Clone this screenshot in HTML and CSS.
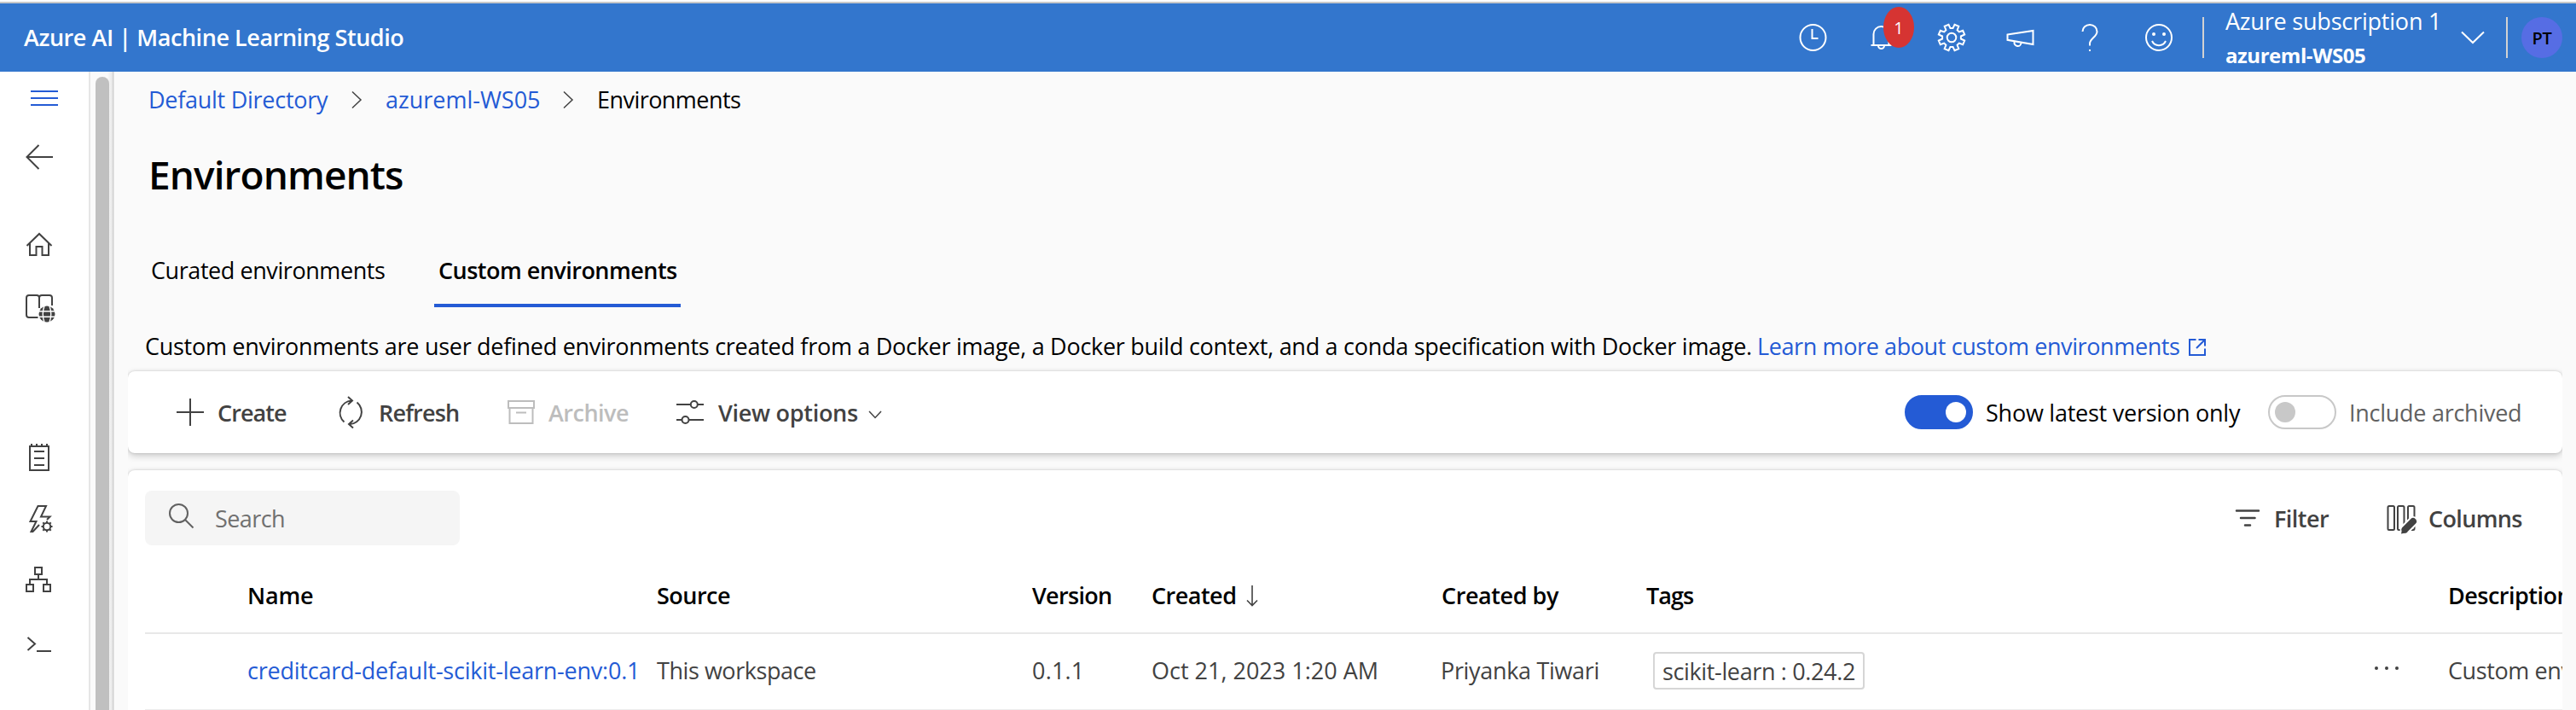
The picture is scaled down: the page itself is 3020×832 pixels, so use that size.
FILE: index.html
```html
<!DOCTYPE html>
<html lang="en">
<head>
<meta charset="utf-8">
<title>Environments - Machine Learning Studio</title>
<link rel="stylesheet" href="styles.css">
</head>
<body>
<header class="topbar">
  <div class="brand">Azure AI | Machine Learning Studio</div>
  <div class="top-icons">
    <span class="slot"><svg class="ic" viewBox="-20 -20 40 40"><circle cx="-.5" r="15"/><path d="M-1.500-10V1H5.500"/></svg></span>
    <span class="slot"><svg class="ic" viewBox="-20 -20 40 40"><path d="M-13.500 9H10.500M-10.500 9V-4A9 9 0 0 1-1.500-13A9 9 0 0 1 7.500-4V9M-5 9.500A3.500 3.500 0 0 0 2 9.500"/></svg><span class="badge">1</span></span>
    <span class="slot"><svg class="ic" viewBox="-20 -20 40 40"><path d="M-1.500-10.900L1.500-10.900 3.500-15.200 8.300-13.200 6.600-8.800 8.800-6.600 13.200-8.300 15.200-3.500 10.900-1.500 10.900 1.500 15.200 3.500 13.200 8.300 8.800 6.600 6.600 8.800 8.300 13.200 3.500 15.200 1.500 10.900-1.500 10.900-3.500 15.200-8.300 13.200-6.600 8.800-8.800 6.600-13.200 8.300-15.200 3.500-10.900 1.500-10.900-1.500-15.200-3.500-13.200-8.300-8.800-6.600-6.600-8.800-8.300-13.200-3.500-15.200Z"/><circle r="5.300"/></svg></span>
    <span class="slot"><svg class="ic" viewBox="-20 -20 40 40"><path d="M-15.500-3.500L14.500-8V8L-15.500 2.800ZM-7.500 4.500V5.500A3.800 3.800 0 0 0 .5 6.500V5.800"/></svg></span>
    <span class="slot"><svg class="ic" viewBox="-20 -20 40 40"><path d="M-8.500-7A8.500 8 0 0 1 8.500-7C8.500-1 0 1.500 0 7V9.500M0 14V16"/></svg></span>
    <span class="slot"><svg class="ic" viewBox="-20 -20 40 40"><circle r="15"/><circle class="dot" cx="-6" cy="-4" r="2"/><circle class="dot" cx="6" cy="-4" r="2"/><path d="M-8 4A8.800 8.800 0 0 0 8 4"/></svg></span>
  </div>
  <div class="vbar"></div>
  <div class="account">
    <div class="sub">Azure subscription 1</div>
    <div class="ws">azureml-WS05</div>
  </div>
  <svg class="acc-chev" viewBox="0 0 28 16"><path d="M1 1.500L14 14 27 1.500"/></svg>
  <div class="vbar"></div>
  <div class="avatar">PT</div>
</header>
<div class="body">
  <nav class="side">
    <svg class="menu" viewBox="28 95 44 40"><path d="M36 107H68M36 115H68M36 123H68"/></svg>
    <svg class="back" viewBox="28 164 44 40"><path d="M62 184H31.500M45.500 170L31.500 184 45.500 198"/></svg>
    <svg class="home" viewBox="28 267 44 40"><path d="M31.500 288L46 274 60.500 288M35 285V299H42.500V289H49.500V299H57V285"/></svg>
    <svg class="book" viewBox="28 341 44 40"><path d="M44.500 372H34A3 3 0 0 1 31 369V349A3 3 0 0 1 34 346H43A3 3 0 0 1 46 349V361M46 349A3 3 0 0 1 49 346H58A3 3 0 0 1 61 349V358"/><circle class="solid" cx="55" cy="368" r="9.500"/><path class="cut" d="M45 364.800H65M45 371.200H65M52 358.500Q48.500 368 52 377.500M58 358.500Q61.500 368 58 377.500"/></svg>
    <svg class="note" viewBox="28 516 44 40"><path d="M35 523H57V551H35ZM37 520V523M43 520V523M49 520V523M55 520V523M40 529H52M40 537H52M40 545H52"/></svg>
    <svg class="bolt" viewBox="28 588 44 40"><path d="M55 609L58.500 605.500H48L54 593H44.500L35.500 611H42.500L36.500 623H38.500L46 615"/><circle cx="55" cy="617" r="4.200"/><path d="M55 613V610.500M55 621V623.500M51 617H48.500M59 617H61.500M52.200 614.200L50.300 612.300M57.800 614.200L59.700 612.300M52.200 619.800L50.300 621.700M57.800 619.800L59.700 621.700"/></svg>
    <svg class="tree" viewBox="28 660 44 40"><path d="M41 665H49V673H41ZM31 685H39V693H31ZM51 685H59V693H51ZM45 673V679M35 685V679H55V685"/></svg>
    <svg class="term" viewBox="28 735 44 40"><path d="M32.500 747L41 754.500 32.500 762M43 763H60"/></svg>
  </nav>
  <div class="scroll"><div class="thumb"></div></div>
  <main class="main">
    <div class="crumbs">
      <a class="c1">Default Directory</a>
      <svg class="crumb-chev" viewBox="0 0 14 22"><path d="M1 1.500L11 11 1 20.500"/></svg>
      <a class="c2">azureml-WS05</a>
      <svg class="crumb-chev" viewBox="0 0 14 22"><path d="M1 1.500L11 11 1 20.500"/></svg>
      <span class="c3">Environments</span>
    </div>
    <h1 class="title">Environments</h1>
    <div class="tabs">
      <div class="tab tab-curated">Curated environments</div>
      <div class="tab tab-custom">Custom environments</div>
    </div>
    <p class="desc"><span class="desc-text">Custom environments are user defined environments created from a Docker image, a Docker build context, and a conda specification with Docker image.</span><a class="learn">Learn more about custom environments</a><svg class="ext" viewBox="0 0 22 22"><path d="M9.500 2H2V20H20V12.500M12.500 2H20V9.500M20 2L10 12"/></svg></p>

    <section class="card toolbar">
      <svg class="plus" viewBox="0 0 32 32"><path d="M0 16H32M16 0V32"/></svg>
      <span class="lbl l-create">Create</span>
      <svg class="refresh" viewBox="0 0 32 40"><path d="M8.500 31.500A14.300 14.300 0 0 1 17 6.500M23.500 8.500A14.300 14.300 0 0 1 15 34M13 2L18 6.500 13 11M19 29.500L14 34 19 38.500"/></svg>
      <span class="lbl l-refresh">Refresh</span>
      <svg class="archive" viewBox="0 0 32 28"><path d="M1 1H31V9H1ZM2.500 9V27H29.500V9M10 14.500H22"/></svg>
      <span class="lbl l-archive">Archive</span>
      <svg class="opts" viewBox="0 0 32 28"><path d="M0 5H16.500M25 5H32M0 23H6M15 23H32"/><circle cx="20.800" cy="5" r="4"/><circle cx="10.500" cy="23" r="4"/></svg>
      <span class="lbl l-view">View options</span>
      <svg class="view-chev" viewBox="0 0 16 10"><path d="M1 1L8 8.500 15 1"/></svg>
      <span class="toggle on"><i></i></span>
      <span class="t-latest">Show latest version only</span>
      <span class="toggle"><i></i></span>
      <span class="t-arch">Include archived</span>
    </section>

    <section class="card grid-card">
      <div class="list-tools">
        <div class="search">
          <svg class="mag" viewBox="0 0 30 30"><circle cx="11.500" cy="11.500" r="10.500"/><path d="M19 19L28.500 28.500"/></svg>
          <span>Search</span>
        </div>
        <svg class="filter" viewBox="0 0 28 24"><path d="M1 3.500H27M6 12H22.500M11 20.500H17"/></svg>
        <span class="lbl l-filter">Filter</span>
        <svg class="cols" viewBox="0 0 36 36"><rect x="1.500" y="2" width="7.500" height="28" rx="1.500"/><rect x="13" y="2" width="7.500" height="28" rx="1.500"/><rect x="25" y="2" width="7.500" height="28" rx="1.500"/><path class="halo" d="M21.500 29.500L31 20"/><path class="pen" d="M21.500 29.500L31 20"/><path class="solid" d="M17 34.500L18.500 27 24.500 33Z"/></svg>
        <span class="lbl l-cols">Columns</span>
      </div>
      <div class="row head">
        <span></span><span class="h-name">Name</span><span>Source</span><span class="h-ver">Version</span>
        <span class="h-created">Created<svg class="sort" viewBox="0 0 14 26"><path d="M7 0V23.500M1 17.500L7 23.500 13 17.500"/></svg></span>
        <span class="h-by">Created by</span><span class="h-tags">Tags</span><span></span><span class="h-desc">Description</span>
      </div>
      <div class="row data">
        <span></span><a class="d-name">creditcard-default-scikit-learn-env:0.1</a><span class="d-src">This workspace</span><span class="d-ver">0.1.1</span>
        <span class="d-date">Oct 21, 2023 1:20 AM</span><span class="d-by">Priyanka Tiwari</span>
        <span class="tag-cell"><span class="tag">scikit-learn : 0.24.2</span></span>
        <svg class="more" viewBox="0 0 30 6"><circle cx="3" cy="3" r="2"/><circle cx="15" cy="3" r="2"/><circle cx="27" cy="3" r="2"/></svg>
        <span class="d-desc">Custom environment</span>
      </div>
    </section>
  </main>
</div>
</body>
</html>
```
FILE: styles.css
```css
* { box-sizing: border-box; }
body {
  margin: 0;
  width: 3020px;
  height: 832px;
  overflow: hidden;
  background: #fff;
  color: #000;
  font-family: "Open Sans", "Noto Sans", sans-serif;
  font-size: 27px;
  line-height: 40px;
  white-space: nowrap;
}
svg { display: block; flex: none; fill: none; stroke: #424242; stroke-width: 2; overflow: visible; }

/* Top bar */
.topbar {
  margin-top: 2px;
  height: 82px;
  border-top: 2px solid #c8c8c8;
  background: #3376cd;
  color: #fff;
  display: flex;
  align-items: center;
  padding: 0 16px 0 28px;
}
.topbar svg { stroke: #fff; }
.brand { font-weight: 600; letter-spacing: -.44px; }
.top-icons { display: flex; margin-left: auto; margin-right: 11px; }
.slot { position: relative; width: 81px; height: 80px; display: flex; align-items: center; justify-content: center; }
.ic { width: 40px; height: 40px; }
.topbar .dot { fill: #fff; stroke: none; }
.badge {
  position: absolute;
  left: 42px;
  top: 4px;
  width: 36px;
  height: 48px;
  border-radius: 50%;
  background: #d63432;
  font-size: 20px;
  line-height: 49px;
  text-align: center;
}
.vbar { width: 2px; height: 48px; background: #d2d2d2; }
.account { width: 248px; height: 80px; margin: 0 28px 0 25px; }
.sub { height: 40px; line-height: 42px; letter-spacing: -.2px; }
.ws { height: 40px; font-size: 24px; font-weight: 700; line-height: 41px; letter-spacing: -.44px; }
.acc-chev { width: 28px; height: 16px; margin-right: 25px; }
.avatar {
  width: 48px;
  height: 48px;
  margin-left: 16px;
  border-radius: 50%;
  background: #566de4;
  color: #000;
  font-size: 20px;
  font-weight: 600;
  line-height: 50px;
  letter-spacing: -.3px;
  text-align: center;
}

/* Side navigation */
.body { display: flex; height: 748px; }
.side { width: 106px; flex: none; border-right: 2px solid #e6e6e6; background: #fff; padding: 11px 0 0 28px; }
.side svg { width: 44px; height: 40px; }
.side .menu { stroke: #245bd5; }
.side .back { margin-top: 29px; }
.side .home { margin-top: 63px; }
.side .book { margin-top: 34px; }
.side .note { margin-top: 135px; }
.side .bolt, .side .tree { margin-top: 32px; }
.side .term { margin-top: 35px; }
.side .book .solid { fill: #424242; stroke: none; }
.side .book .cut { stroke: #fff; stroke-width: 1.4; }
.scroll {
  width: 28px;
  flex: none;
  padding: 6px 0 0 6px;
  background: linear-gradient(to right, #fafafa 0, #fafafa 20px, #e6e6e6 26px, #d0d0d0 26px, #d0d0d0 27px, #e6e6e6 27px);
}
.thumb { width: 16px; height: 742px; border-radius: 8px 8px 0 0; background: #c0c0c0; }

/* Page heading */
.main { flex: 1; min-width: 0; background: #fafafa; padding: 13px 16px 0; }
a { color: #245bd5; }
.crumbs { display: flex; align-items: center; height: 40px; padding-left: 23px; }
.crumb-chev { width: 14px; height: 22px; stroke-width: 1.5; margin: -1px 25px 0 27px; }
.c1 { width: 212px; padding-left: 1px; letter-spacing: -.27px; }
.c2 { width: 182px; padding-left: 1px; }
.c3 { padding-left: 1px; letter-spacing: -.55px; }
.title { margin: 37px 0 0 24px; font-size: 46px; line-height: 60px; font-weight: 600; letter-spacing: -.93px; }
.tabs { display: flex; margin-top: 63px; height: 63px; }
.tab { height: 63px; }
.tab-curated { width: 332px; margin-left: 27px; letter-spacing: -.43px; }
.tab-custom { width: 289px; padding-left: 5px; font-weight: 600; letter-spacing: -.52px; border-bottom: 4px solid #245bd5; }
.desc { display: flex; align-items: center; height: 40px; margin: 26px 0 0 20px; }
.desc-text { width: 1890px; letter-spacing: -.28px; }
.learn { width: 505px; letter-spacing: -.39px; }
.ext { width: 22px; height: 22px; margin-top: 2px; stroke: #245bd5; }

/* Cards */
.card {
  background: #fff;
  border-radius: 8px;
  box-shadow: 0 3px 8px rgba(0, 0, 0, .2), 0 0 3px rgba(0, 0, 0, .16);
  clip-path: inset(-20px 0);
}
.toolbar { display: flex; align-items: center; height: 96px; margin-top: 9px; padding-left: 57px; }
.lbl { flex: none; padding-top: 1px; font-weight: 600; color: #424242; }
.plus { width: 32px; height: 32px; }
.l-create { width: 93px; margin-left: 16px; letter-spacing: -.93px; }
.refresh { width: 32px; height: 40px; margin-left: 47px; }
.l-refresh { width: 98px; margin-left: 17px; letter-spacing: -.82px; }
.archive { width: 32px; height: 28px; margin-left: 53px; }
.toolbar .archive { stroke: #bdbdbd; }
.l-archive { width: 100px; margin-left: 16px; letter-spacing: -.5px; color: #bdbdbd; }
.opts { width: 32px; height: 28px; margin-left: 50px; }
.l-view { width: 167px; margin-left: 17px; letter-spacing: -.28px; }
.view-chev { width: 16px; height: 10px; margin: 6px 0 0 9px; stroke-width: 1.5; }
.toggle { flex: none; width: 80px; height: 40px; border: 2px solid #c8c8c8; border-radius: 20px; padding: 6px; }
.toggle i { display: block; width: 24px; height: 24px; border-radius: 50%; background: #c8c8c8; }
.toggle.on { margin-left: auto; border-color: #245bd5; background: #245bd5; }
.toggle.on i { margin-left: 40px; background: #fff; }
.t-latest { width: 331px; margin-left: 15px; padding-top: 1px; letter-spacing: -.24px; }
.t-arch { width: 250px; margin-left: 15px; padding-top: 1px; letter-spacing: -.27px; color: #616161; }

/* Environment list */
.grid-card { height: 320px; margin-top: 20px; padding: 24px 0 0 20px; border-radius: 8px 8px 0 0; }
.list-tools { display: flex; align-items: center; height: 64px; }
.search { display: flex; align-items: center; width: 369px; height: 64px; padding-left: 28px; border-radius: 8px; background: #f5f5f5; color: #707070; letter-spacing: -.59px; }
.search span { margin: 1px 0 0 24px; }
.mag { width: 30px; height: 30px; margin-top: -4px; stroke: #616161; }
.filter { width: 28px; height: 24px; margin-left: auto; stroke-width: 2.5; stroke-linecap: round; }
.l-filter { width: 132px; margin-left: 17px; letter-spacing: -.53px; }
.cols { width: 36px; height: 36px; margin-top: 4px; }
.cols .halo { stroke: #fff; stroke-width: 12; stroke-linecap: round; }
.cols .pen { stroke-width: 8; stroke-linecap: round; }
.cols .solid { fill: #424242; stroke: none; }
.l-cols { width: 157px; margin-left: 13px; letter-spacing: -.65px; }
.row { display: grid; grid-template-columns: 120px 480px 440px 140px 340px 240px 853px 87px 1fr; align-items: center; }
.row > * { min-width: 0; }
.head { height: 104px; padding-top: 16px; border-bottom: 2px solid #e8e8e8; font-weight: 600; letter-spacing: -.51px; }
.h-name { letter-spacing: -.19px; }
.h-ver { letter-spacing: -.7px; }
.h-created { display: flex; align-items: center; }
.sort { width: 14px; height: 26px; margin: 2px 0 0 12px; stroke-width: 1.6; }
.h-by { letter-spacing: -.43px; }
.h-tags { letter-spacing: -.96px; }
.data { height: 89px; padding-bottom: 2px; border-bottom: 1px solid #ededed; color: #424242; }
.d-name { letter-spacing: -.23px; }
.d-src { letter-spacing: -.45px; }
.d-ver { letter-spacing: .2px; }
.d-date { letter-spacing: 0; }
.d-by { letter-spacing: -.33px; margin-left: -1px; }
.tag-cell { padding-left: 8px; }
.tag { display: inline-block; height: 44px; padding: 0 9px; border: 2px solid #d6d6d6; border-radius: 4px; line-height: 42px; letter-spacing: -.36px; vertical-align: middle; }
.more { width: 30px; height: 6px; margin-top: -6px; }
.row .more { fill: #424242; stroke: none; }
.d-desc { letter-spacing: -.4px; }
```
